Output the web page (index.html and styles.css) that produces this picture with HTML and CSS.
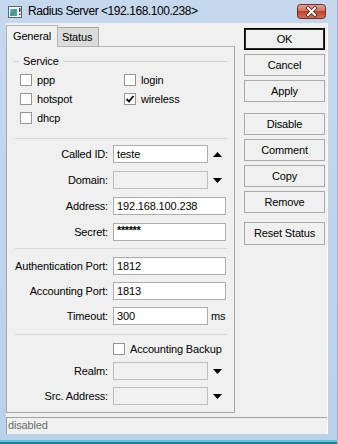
FILE: index.html
```html
<!DOCTYPE html>
<html>
<head>
<meta charset="utf-8">
<link rel="stylesheet" href="styles.css">
</head>
<body>
<div class="window">
  <div class="titlebar">
    <svg class="app-icon" width="14" height="12" viewBox="0 0 14 12">
      <defs>
        <linearGradient id="ig" x1="0" y1="0" x2="1" y2="1">
          <stop offset="0" stop-color="#7fb5c9"/>
          <stop offset="0.5" stop-color="#3f9a86"/>
          <stop offset="1" stop-color="#5aa6c8"/>
        </linearGradient>
      </defs>
      <rect x="0.5" y="0.5" width="13" height="11" fill="#f4f6f8" stroke="#5b6670"/>
      <rect x="2" y="3" width="7" height="7" fill="url(#ig)"/>
      <rect x="11" y="2" width="1.5" height="4" fill="#3a3f44"/>
      <rect x="11" y="7.5" width="1.5" height="1.5" fill="#3a3f44"/>
    </svg>
    <span class="title">Radius Server &lt;192.168.100.238&gt;</span>
    <div class="close">
      <svg width="29" height="15" viewBox="0 0 29 15">
        <defs>
          <linearGradient id="cg" x1="0" y1="0" x2="0" y2="1">
            <stop offset="0" stop-color="#e8a494"/>
            <stop offset="0.45" stop-color="#d1735f"/>
            <stop offset="0.5" stop-color="#c0432c"/>
            <stop offset="1" stop-color="#d0735a"/>
          </linearGradient>
        </defs>
        <rect x="0.5" y="0.5" width="28" height="14" rx="3" fill="url(#cg)" stroke="#6b2b2a"/>
        <path d="M11 4 L18 11 M18 4 L11 11" stroke="#4a2020" stroke-width="3.6" stroke-linecap="square"/>
        <path d="M11 4 L18 11 M18 4 L11 11" stroke="#ffffff" stroke-width="2" stroke-linecap="square"/>
      </svg>
    </div>
  </div>
  <div class="client">
    <div class="main">
      <div class="left">
        <div class="tabs">
          <div class="tab active">General</div>
          <div class="tab inactive">Status</div>
        </div>
        <div class="panel">
          <div class="group-head"><span class="group-title">Service</span></div>
          <div class="checks">
            <div class="check"><span class="cb"></span><span>ppp</span></div>
            <div class="check"><span class="cb"></span><span>login</span></div>
            <div class="check"><span class="cb"></span><span>hotspot</span></div>
            <div class="check"><span class="cb"><svg width="10" height="10" viewBox="0 0 10 10"><path d="M1.5 5 L4 7.5 L8.5 2" fill="none" stroke="#000" stroke-width="1.8"/></svg></span><span>wireless</span></div>
            <div class="check"><span class="cb"></span><span>dhcp</span></div>
          </div>
          <div class="sep sep-1"></div>
          <div class="rows rows-a">
            <div class="row"><span class="lbl">Called ID:</span><span class="field w-s">teste</span><span class="arrow"><svg width="9" height="5" viewBox="0 0 9 5"><path d="M0 5 L4.5 0 L9 5 Z" fill="#000"/></svg></span></div>
            <div class="row"><span class="lbl">Domain:</span><span class="field w-s off"></span><span class="arrow"><svg width="9" height="5" viewBox="0 0 9 5"><path d="M0 0 L9 0 L4.5 5 Z" fill="#000"/></svg></span></div>
            <div class="row"><span class="lbl">Address:</span><span class="field w-l">192.168.100.238</span></div>
            <div class="row"><span class="lbl">Secret:</span><span class="field w-l secret">******</span></div>
          </div>
          <div class="sep sep-2"></div>
          <div class="rows rows-b">
            <div class="row"><span class="lbl">Authentication Port:</span><span class="field w-l">1812</span></div>
            <div class="row"><span class="lbl">Accounting Port:</span><span class="field w-l">1813</span></div>
            <div class="row"><span class="lbl">Timeout:</span><span class="field w-s">300</span><span class="unit">ms</span></div>
          </div>
          <div class="sep sep-3"></div>
          <div class="check backup"><span class="cb"></span><span>Accounting Backup</span></div>
          <div class="rows rows-c">
            <div class="row"><span class="lbl">Realm:</span><span class="field w-s off"></span><span class="arrow"><svg width="9" height="5" viewBox="0 0 9 5"><path d="M0 0 L9 0 L4.5 5 Z" fill="#000"/></svg></span></div>
            <div class="row"><span class="lbl">Src. Address:</span><span class="field w-s off"></span><span class="arrow"><svg width="9" height="5" viewBox="0 0 9 5"><path d="M0 0 L9 0 L4.5 5 Z" fill="#000"/></svg></span></div>
          </div>
        </div>
      </div>
      <div class="buttons">
        <div class="btn-group first">
          <div class="btn default">OK</div>
          <div class="btn">Cancel</div>
          <div class="btn">Apply</div>
        </div>
        <div class="btn-group second">
          <div class="btn">Disable</div>
          <div class="btn">Comment</div>
          <div class="btn">Copy</div>
          <div class="btn">Remove</div>
        </div>
        <div class="btn-group third">
          <div class="btn tall">Reset Status</div>
        </div>
      </div>
    </div>
    <div class="statusbar">disabled</div>
  </div>
  <div class="bottom-edge"></div>
</div>
</body>
</html>
```

FILE: styles.css
```css
* { box-sizing: border-box; margin: 0; padding: 0; }
html, body { width: 338px; height: 444px; overflow: hidden; }
body {
  background: #bcd3ec;
  font-family: "Liberation Sans", Arial, sans-serif;
  font-size: 11px;
  letter-spacing: -0.15px;
  color: #000;
}
.window {
  width: 338px;
  height: 444px;
  background: linear-gradient(#c5d8ee, #bad1eb);
  display: flex;
  flex-direction: column;
  border-right: 1px solid #8fb4d8;
}
.titlebar {
  height: 23px;
  display: flex;
  align-items: flex-start;
}
.app-icon { margin: 6px 0 0 8px; flex: none; }
.title {
  margin: 4px 0 0 6px;
  font-size: 12px;
  letter-spacing: -0.45px;
  line-height: 15px;
  color: #000;
}
.close { margin: 4px 11px 0 auto; height: 15px; }
.close svg { display: block; }

.client {
  margin-left: 6px;
  width: 322px;
  height: 411px;
  background: #f0f0f0;
  border-right: 1px solid #fdfdfd;
  display: flex;
  flex-direction: column;
}
.main { display: flex; height: 394px; }
.left { width: 229px; display: flex; flex-direction: column; }
.tabs { height: 23px; display: flex; align-items: flex-end; }
.tab {
  border: 1px solid #a7a7a7;
  border-bottom: none;
  line-height: 17px;
}
.tab.active {
  position: relative;
  z-index: 1;
  width: 52px;
  height: 22px;
  margin-bottom: -1px;
  padding: 2px 0 0 6px;
  background: #f0f0f0;
  border-color: #b4b4b4;
}
.tab.inactive {
  width: 41px;
  height: 19px;
  padding: 1px 0 0 4px;
  border-left: none;
  background: #dcdcdc;
}
.panel {
  height: 367px;
  border: 1px solid #a7a7a7;
  border-top-color: #b4b4b4;
  display: flex;
  flex-direction: column;
}
.group-head {
  margin: 7px 7px 0 7px;
  height: 14px;
  display: flex;
  align-items: center;
}
.group-head::before {
  content: "";
  width: 5px;
  border-top: 1px solid #cfcfcf;
}
.group-head::after {
  content: "";
  flex: 1;
  border-top: 1px solid #cfcfcf;
}
.group-title { padding: 0 4px 0 4px; line-height: 14px; }
.checks {
  margin: 6px 0 0 13px;
  display: grid;
  grid-template-columns: 104px auto;
  row-gap: 7px;
}
.check { display: flex; align-items: center; height: 12px; }
.cb {
  width: 12px;
  height: 12px;
  border: 1px solid #959595;
  background: #fff;
  margin-right: 5px;
  display: flex;
  align-items: center;
  justify-content: center;
  flex: none;
}
.cb svg { display: block; }
.sep { border-top: 1px solid #d6d6d6; margin-left: 8px; margin-right: 7px; }
.sep-1 { margin-top: 14px; }
.sep-2 { margin-top: 7px; }
.sep-3 { margin-top: 9px; }
.rows { display: flex; flex-direction: column; }
.rows-a { margin-top: 6px; gap: 8px; }
.rows-b { margin-top: 8px; gap: 7px; }
.rows-c { margin-top: 7px; gap: 7px; }
.row { display: flex; align-items: center; height: 18px; }
.lbl { width: 101px; text-align: right; margin-right: 5px; flex: none; }
.field {
  height: 18px;
  border: 1px solid #acacac;
  background: #fff;
  padding: 0 3px;
  line-height: 16px;
  flex: none;
}
.field.off { background: #f0f0f0; border-color: #bdbdbd; }
.field.secret { letter-spacing: -0.4px; font-size: 11px; line-height: 13px; font-weight: bold; }
.w-s { width: 95px; }
.w-l { width: 113px; }
.arrow { width: 18px; display: flex; justify-content: center; }
.arrow svg { display: block; }
.unit { margin-left: 3px; }
.backup { margin: 8px 0 0 106px; }

.buttons { margin: 5px 0 0 9px; width: 81px; display: flex; flex-direction: column; }
.btn-group { display: flex; flex-direction: column; gap: 4px; }
.btn-group.second { margin-top: 11px; }
.btn-group.third { margin-top: 9px; }
.btn {
  height: 22px;
  border: 1px solid #a9a9a9;
  background: #f0f0f0;
  text-align: center;
  line-height: 20px;
}
.btn.default { border: 1px solid #000; box-shadow: inset 0 0 0 1px #2a2a2a; }
.btn.tall { height: 23px; line-height: 21px; }

.statusbar {
  margin-top: 0;
  height: 17px;
  border-top: 1px solid #a0a0a0;
  border-left: 1px solid #a0a0a0;
  padding-left: 1px;
  line-height: 15px;
  color: #6d6d6d;
}
.bottom-edge {
  margin-top: auto;
  height: 10px;
  background: linear-gradient(#bad1eb 0 6px, #5fc6dc 6px 8px, #1f7f9a 8px);
}
```
